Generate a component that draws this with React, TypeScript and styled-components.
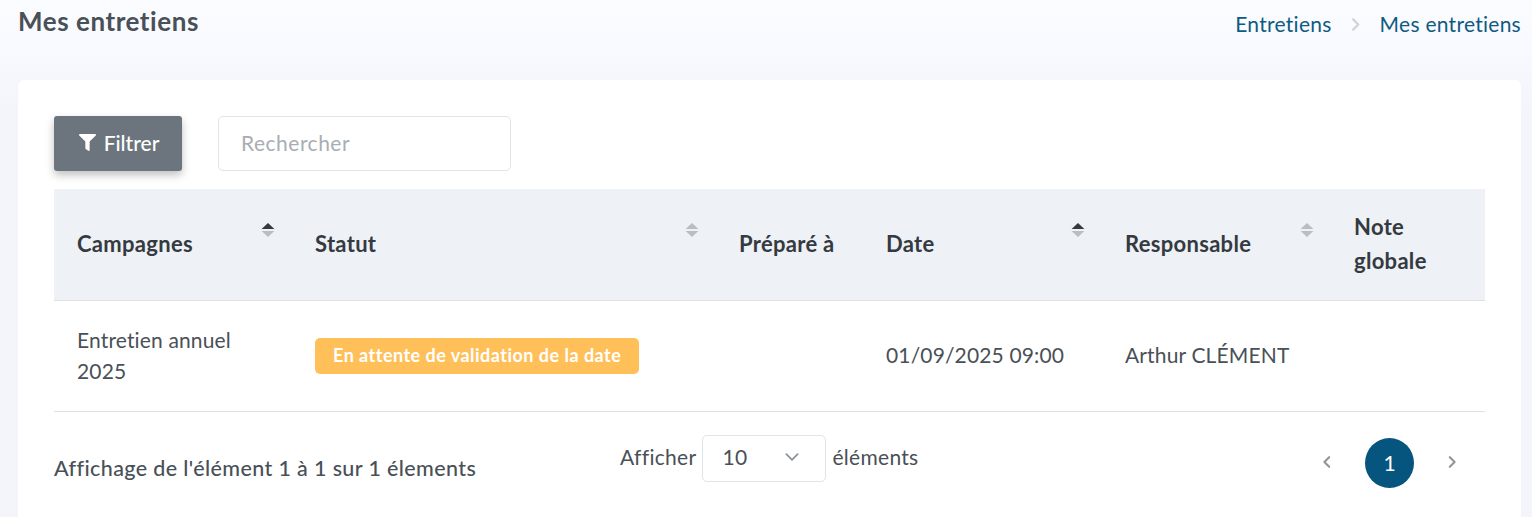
import styled, { createGlobalStyle } from 'styled-components';

const GlobalStyle = createGlobalStyle`
  html, body {
    margin: 0;
    padding: 0;
    height: 517px;
    overflow: hidden;
    background: #f5f7fb;
  }
  body {
    font-family: "Lato", "Open Sans", sans-serif;
    font-variant-ligatures: none;
    color: #495057;
  }
`;

const Page = styled.div`
  height: 517px;
  box-sizing: border-box;
  padding: 0 11px 0 18px;
  background: linear-gradient(180deg, #fbfcff 0%, #f8faff 40px, #f3f5fa 110px);
`;

const TitleBar = styled.div`
  display: flex;
  justify-content: space-between;
  height: 80px;
`;

const Title = styled.h1`
  margin: 6px 0 0 0;
  font-size: 26px;
  line-height: 30px;
  font-weight: 700;
  letter-spacing: 0.55px;
  color: #495057;
`;

const Breadcrumb = styled.nav`
  display: flex;
  align-items: center;
  height: 20px;
  margin-top: 14px;
  font-size: 21px;
  letter-spacing: 0.27px;
  color: #0f5a82;
`;

const Crumb = styled.span`
  line-height: 20px;
`;

const CrumbSep = styled.span`
  display: flex;
  margin: 0 17px 0 16px;
  color: #ced4da;
`;

const Card = styled.section`
  background: #fff;
  border-radius: 6px 6px 0 0;
  height: 437px;
  box-sizing: border-box;
  padding: 36px 36px 0;
`;

const Toolbar = styled.div`
  display: flex;
  gap: 36px;
  margin-bottom: 18px;
`;

const FilterButton = styled.button`
  display: flex;
  align-items: center;
  justify-content: center;
  gap: 8px;
  width: 128px;
  height: 55px;
  padding: 0 0 3px 2px;
  border: 0;
  border-radius: 3px;
  background: #6c757d;
  color: #fff;
  font: 500 21px "Lato", sans-serif;
  box-shadow: 0 4px 8px rgba(0, 0, 0, 0.25);
`;

const Search = styled.input`
  width: 293px;
  height: 55px;
  box-sizing: border-box;
  padding: 0 22px 3px;
  border: 1px solid #e0e3e7;
  border-radius: 5px;
  background: #fff;
  font: 400 21px "Lato", sans-serif;
  letter-spacing: 0.5px;
  &::placeholder {
    color: #a9adb2;
    opacity: 1;
  }
`;

const Table = styled.table`
  width: 1431px;
  table-layout: fixed;
  border-collapse: collapse;
`;

const Th = styled.th`
  position: relative;
  height: 111px;
  box-sizing: border-box;
  padding: 0 23px;
  background: #eef1f6;
  border-bottom: 1px solid #dee2e6;
  text-align: left;
  font-size: 22px;
  line-height: 34px;
  font-weight: 700;
  letter-spacing: 0.3px;
  color: #343a40;
`;

const SortIcon = styled.svg`
  position: absolute;
  top: 33px;
  right: 17px;
  width: 14px;
  height: 16px;
`;

const Td = styled.td`
  height: 111px;
  box-sizing: border-box;
  padding: 0 23px 2px;
  border-bottom: 1px solid #dee2e6;
  font-size: 21px;
  line-height: 31px;
  letter-spacing: 0.15px;
  color: #495057;
`;

const BadgeCell = styled(Td)`
  padding-bottom: 0;
`;

const Badge = styled.span`
  display: inline-block;
  padding: 0 18px;
  height: 36px;
  line-height: 35px;
  border-radius: 5px;
  background: #ffc05a;
  color: #fff;
  font-size: 18px;
  font-weight: 700;
  letter-spacing: 0.48px;
  white-space: nowrap;
`;

const Footer = styled.div`
  display: grid;
  grid-template-columns: 566px 1fr auto;
  align-items: start;
  height: 105px;
`;

const Info = styled.div`
  margin-top: 42px;
  font-size: 21.5px;
  line-height: 28px;
  font-weight: 500;
  letter-spacing: 0.38px;
  color: #495057;
`;

const Length = styled.div`
  display: flex;
  align-items: center;
  gap: 6px;
  margin-top: 23px;
  font-size: 21px;
  letter-spacing: 0.3px;
`;

const LengthLabel = styled.span`
  margin-top: -4px;
`;

const Select = styled.div`
  display: flex;
  align-items: center;
  justify-content: space-between;
  width: 124px;
  height: 47px;
  box-sizing: border-box;
  padding: 0 24px 0 19px;
  border: 1px solid #e0e3e7;
  border-radius: 5px;
  color: #495057;
`;

const SelectValue = styled.span`
  margin-top: -4px;
`;

const Pager = styled.div`
  display: flex;
  align-items: center;
  gap: 31px;
  margin: 26px 26px 0 0;
`;

const PagerArrow = styled.span`
  display: flex;
  margin-top: -2px;
  color: #8f959b;
`;

const PageNumber = styled.span`
  display: flex;
  align-items: center;
  justify-content: center;
  width: 49px;
  height: 50px;
  border-radius: 50%;
  background: #05557f;
  color: #fff;
  font-size: 21px;
`;

const Sort = ({ active }: { active?: boolean }) => (
  <SortIcon viewBox="0 0 13 15">
    <path d="M6.5 1 12.5 6.5H.5Z" fill={active ? '#343a40' : '#b9bec5'} />
    <path d="M6.5 14 .5 8.5h12Z" fill="#b9bec5" />
  </SortIcon>
);

const Chevron = ({ size, left }: { size: number; left?: boolean }) => (
  <svg width={size} height={size} viewBox="0 0 16 16" fill="none" stroke="currentColor" strokeWidth="2.4" strokeLinecap="round" strokeLinejoin="round">
    <path d={left ? 'M10.5 2.5 5 8l5.5 5.5' : 'M5.5 2.5 11 8l-5.5 5.5'} />
  </svg>
);

export default function App() {
  return (
    <Page>
      <GlobalStyle />
      <TitleBar>
        <Title>Mes entretiens</Title>
        <Breadcrumb>
          <Crumb>Entretiens</Crumb>
          <CrumbSep>
            <Chevron size={15} />
          </CrumbSep>
          <Crumb>Mes entretiens</Crumb>
        </Breadcrumb>
      </TitleBar>
      <Card>
        <Toolbar>
          <FilterButton>
            <svg width="17" height="17" viewBox="0 0 512 512" fill="#fff">
              <path d="M487 0H25C3 0-9 27 7 43l184 184v205c0 8 4 15 10 20l80 56c16 11 39 0 39-20V227L505 43c16-16 4-43-18-43z" />
            </svg>
            Filtrer
          </FilterButton>
          <Search placeholder="Rechercher" />
        </Toolbar>
        <Table>
          <colgroup>
            <col width="238" />
            <col width="424" />
            <col width="147" />
            <col width="239" />
            <col width="229" />
            <col width="154" />
          </colgroup>
          <thead>
            <tr>
              <Th>Campagnes<Sort active /></Th>
              <Th>Statut<Sort /></Th>
              <Th>Préparé à</Th>
              <Th>Date<Sort active /></Th>
              <Th>Responsable<Sort /></Th>
              <Th>Note globale</Th>
            </tr>
          </thead>
          <tbody>
            <tr>
              <Td>Entretien annuel 2025</Td>
              <BadgeCell><Badge>En attente de validation de la date</Badge></BadgeCell>
              <Td></Td>
              <Td>01/09/2025 09:00</Td>
              <Td>Arthur CLÉMENT</Td>
              <Td></Td>
            </tr>
          </tbody>
        </Table>
        <Footer>
          <Info>Affichage de l'élément 1 à 1 sur 1 élements</Info>
          <Length>
            <LengthLabel>Afficher</LengthLabel>
            <Select>
              <SelectValue>10</SelectValue>
              <PagerArrow>
                <svg width="18" height="18" viewBox="0 0 16 16" fill="none" stroke="currentColor" strokeWidth="1.6" strokeLinecap="round" strokeLinejoin="round">
                  <path d="M3 5.5 8 10.5l5-5" />
                </svg>
              </PagerArrow>
            </Select>
            <LengthLabel>éléments</LengthLabel>
          </Length>
          <Pager>
            <PagerArrow><Chevron size={14} left /></PagerArrow>
            <PageNumber>1</PageNumber>
            <PagerArrow><Chevron size={14} /></PagerArrow>
          </Pager>
        </Footer>
      </Card>
    </Page>
  );
}
